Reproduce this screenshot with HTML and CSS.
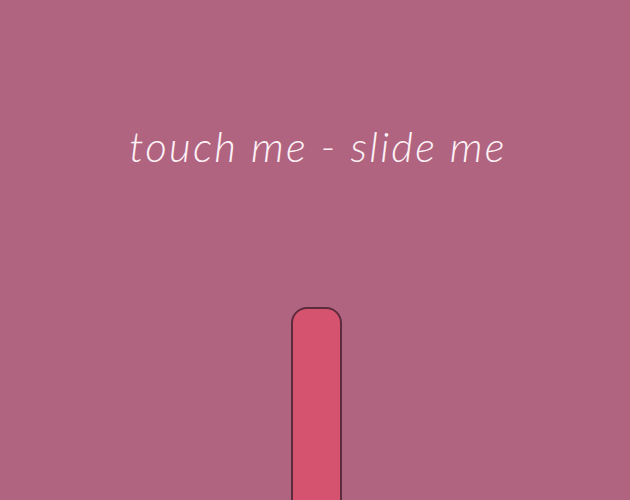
FILE: index.html
```html
<!DOCTYPE html>
<html lang="en">
<head>
  <meta charset="UTF-8" />
  <title>touch me - slide me</title>
  <link rel="stylesheet" href="styles.css">
</head>
<body>

<div class="stage">
  <h1 class="title">touch me - slide me</h1>
  <div class="slider"></div>
</div>

</body>
</html>
```

FILE: styles.css
```css
html, body {
  margin: 0;
  height: 100%;
  overflow: hidden;
}

body {
  background-color: #b06480;
  font-family: Lato, "Open Sans", sans-serif;
}

.stage {
  display: flex;
  flex-direction: column;
  align-items: center;
  padding-left: 6px;
}

.title {
  margin: 121px 0 0;
  font-size: 42px;
  font-weight: 300;
  font-style: italic;
  letter-spacing: 2.2px;
  color: #fdf1f6;
}

.slider {
  margin: 136px 0 0 -3px;
  width: 47px;
  height: 300px;
  background-color: #d6536f;
  border: 2px solid #5e2a3d;
  border-radius: 16px;
}
```
